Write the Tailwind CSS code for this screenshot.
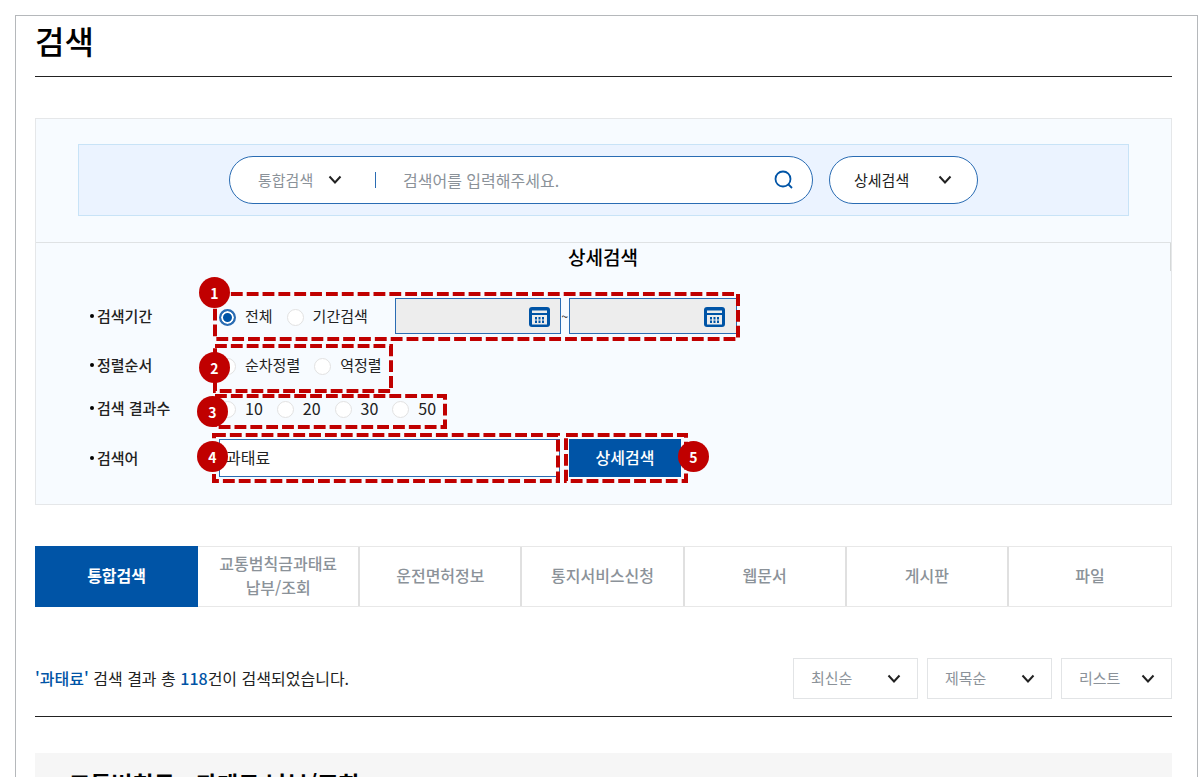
<!DOCTYPE html>
<html lang="ko">

<head>
    <meta charset="UTF-8">
    <meta name="viewport" content="width=device-width, initial-scale=1.0">
    <title>검색</title>
    <script src="https://cdn.jsdelivr.net/npm/@tailwindcss/browser@4"></script>
</head>

<body class="bg-white font-['Noto_Sans_CJK_KR',sans-serif] text-[#222]">
    <main class="mt-[15px] mr-[5px] ml-[15px] h-[calc(100vh-15px)] overflow-hidden border-t border-r border-l border-[#b5b8bb] pr-[25px] pl-[19px]">
        <h1 class="border-b border-[#222] pb-3 text-[32px] leading-[48px] font-medium text-black">검색</h1>

        <section class="mt-[41px] border border-[#e5e7e9] bg-[#f7fbff]">
            <form class="mx-[42px] mt-[25px] mb-[26px] flex justify-center gap-4 border border-[#c8e3f7] bg-[#ebf3ff] py-[11px]">
                <div class="flex h-12 w-[584px] items-center rounded-full border border-[#2a6cb3] bg-white pr-[18px] pl-7">
                    <div class="relative flex items-center">
                        <select aria-label="검색 구분" class="w-[84px] appearance-none text-[15px] text-[#8b9299]">
                            <option>통합검색</option>
                        </select>
                        <svg class="pointer-events-none absolute right-0" width="14" height="10" viewBox="0 0 14 10" fill="none" stroke="#222" stroke-width="2"><path d="M1.500 1.500 7 7.500l5.500-6" /></svg>
                    </div>
                    <span class="ml-[33px] h-4 w-px bg-[#2a6cb3]"></span>
                    <input type="text" aria-label="검색어" placeholder="검색어를 입력해주세요." class="ml-[27px] min-w-0 flex-1 text-base outline-none placeholder:text-[#8b9299]">
                    <button type="button" aria-label="검색">
                        <svg width="20" height="20" viewBox="0 0 20 20" fill="none" stroke="#0054a6" stroke-width="1.800"><circle cx="9" cy="9" r="7.500" /><path d="m14 14 4 4" /></svg>
                    </button>
                </div>
                <button type="button" class="flex h-12 w-[149px] items-center justify-between rounded-full border border-[#2a6cb3] bg-white pr-[25px] pl-6 text-[15px]">
                    상세검색
                    <svg width="14" height="10" viewBox="0 0 14 10" fill="none" stroke="#222" stroke-width="2"><path d="M1.500 1.500 7 7.500l5.500-6" /></svg>
                </button>
            </form>

            <form class="border-t border-[#dfe2e4] pb-[27px]">
                <h2 class="border-r border-[#d5d8d8] text-center text-[19px] leading-7 font-medium text-black">상세검색</h2>

                <div class="mt-[27px] flex flex-col gap-[19px] pl-[54px] text-[15px]">
                    <!-- 검색기간 -->
                    <div class="flex h-9 items-center">
                        <div class="flex w-[129px] items-center gap-[3px] font-medium"><span class="size-1 rounded-full bg-black"></span>검색기간</div>
                        <div class="relative flex h-9 items-center gap-[14px]">
                            <label class="flex items-center gap-[9px]"><input type="radio" name="period" checked class="mt-[3px] size-[17px] appearance-none rounded-full border-2 border-[#2a6cb3] bg-white checked:bg-[#0054a6] checked:shadow-[inset_0_0_0_2px_#fff]">전체</label>
                            <label class="flex items-center gap-[9px]"><input type="radio" name="period" class="mt-[3px] size-[17px] appearance-none rounded-full border border-[#e2e2e2] bg-white">기간검색</label>
                            <div class="ml-[13px] flex items-center">
                                <div class="relative flex items-center">
                                    <input type="text" aria-label="시작일" readonly class="h-9 w-[166px] border border-[#2a6cb3] bg-[#ededed] px-2">
                                    <svg class="absolute right-[11px] mt-[2px]" width="21" height="20" viewBox="0 0 21 20"><rect width="21" height="20" rx="3" fill="#0054a6" /><path d="M3 3.500h15v2.500H3zM3 8h15v9.500H3z" fill="#ededed" /><path d="M6 10h2v2.500H6zM9.500 10h2v2.500h-2zM13 10h2v2.500h-2zM6 13.500h2V16H6zM9.500 13.500h2V16h-2zM13 13.500h2V16h-2z" fill="#0054a6" /></svg>
                                </div>
                                <span class="w-2 text-center text-xs">~</span>
                                <div class="relative flex items-center">
                                    <input type="text" aria-label="종료일" readonly class="h-9 w-[168px] border border-[#2a6cb3] bg-[#ededed] px-2">
                                    <svg class="absolute right-3 mt-[2px]" width="21" height="20" viewBox="0 0 21 20"><rect width="21" height="20" rx="3" fill="#0054a6" /><path d="M3 3.500h15v2.500H3zM3 8h15v9.500H3z" fill="#ededed" /><path d="M6 10h2v2.500H6zM9.500 10h2v2.500h-2zM13 10h2v2.500h-2zM6 13.500h2V16H6zM9.500 13.500h2V16h-2zM13 13.500h2V16h-2z" fill="#0054a6" /></svg>
                                </div>
                            </div>
                            <svg class="pointer-events-none absolute -top-[6px] -left-[6px] h-[49px] w-[527px]" fill="none" stroke="#c00000" stroke-width="4"><rect x="2" y="2" width="523" height="45" stroke-dasharray="11.850 4" /></svg>
                            <span class="absolute -top-[21px] -left-5 flex size-[31px] items-center justify-center rounded-full bg-[#c00000] text-sm font-bold text-white">1</span>
                        </div>
                    </div>

                    <!-- 정렬순서 -->
                    <div class="flex h-6 items-center">
                        <div class="flex w-[129px] items-center gap-[3px] font-medium"><span class="size-1 rounded-full bg-black"></span>정렬순서</div>
                        <div class="relative flex h-6 items-center gap-[14px]">
                            <label class="flex items-center gap-[9px]"><input type="radio" name="sort" class="mt-[3px] size-[17px] appearance-none rounded-full border border-[#e2e2e2] bg-white">순차정렬</label>
                            <label class="flex items-center gap-[9px]"><input type="radio" name="sort" class="mt-[3px] size-[17px] appearance-none rounded-full border border-[#e2e2e2] bg-white">역정렬</label>
                            <svg class="pointer-events-none absolute -top-[9px] -left-[6px] h-[49px] w-[180px]" fill="none" stroke="#c00000" stroke-width="4"><rect x="2" y="2" width="176" height="45" stroke-dasharray="11.850 4" /></svg>
                            <span class="absolute -top-px -left-5 flex size-[31px] items-center justify-center rounded-full bg-[#c00000] text-sm font-bold text-white">2</span>
                        </div>
                    </div>

                    <!-- 검색 결과수 -->
                    <div class="flex h-6 items-center">
                        <div class="flex w-[129px] items-center gap-[3px] font-medium"><span class="size-1 rounded-full bg-black"></span>검색 결과수</div>
                        <div class="relative flex h-6 items-center gap-[14px] text-base">
                            <label class="flex items-center gap-[9px]"><input type="radio" name="count" class="mt-[3px] size-[17px] appearance-none rounded-full border border-[#e2e2e2] bg-white">10</label>
                            <label class="flex items-center gap-[9px]"><input type="radio" name="count" class="mt-[3px] size-[17px] appearance-none rounded-full border border-[#e2e2e2] bg-white">20</label>
                            <label class="flex items-center gap-[9px]"><input type="radio" name="count" class="mt-[3px] size-[17px] appearance-none rounded-full border border-[#e2e2e2] bg-white">30</label>
                            <label class="flex items-center gap-[9px]"><input type="radio" name="count" class="mt-[3px] size-[17px] appearance-none rounded-full border border-[#e2e2e2] bg-white">50</label>
                            <svg class="pointer-events-none absolute -top-[2px] -left-[6px] h-[35px] w-[234px]" fill="none" stroke="#c00000" stroke-width="4"><rect x="2" y="2" width="230" height="31" stroke-dasharray="11.850 4" /></svg>
                            <span class="absolute top-0 -left-[22px] flex size-[31px] items-center justify-center rounded-full bg-[#c00000] text-sm font-bold text-white">3</span>
                        </div>
                    </div>

                    <!-- 검색어 -->
                    <div class="flex h-[38px] items-center">
                        <label for="keyword" class="flex w-[129px] items-center gap-[3px] font-medium"><span class="size-1 rounded-full bg-black"></span>검색어</label>
                        <div class="relative">
                            <input type="text" id="keyword" value="과태료" class="block h-[38px] w-[341px] border border-[#2a6cb3] bg-white px-[6px] pb-[3px] text-base">
                            <svg class="pointer-events-none absolute -top-[6px] -left-[7px] h-[50px] w-[348px]" fill="none" stroke="#c00000" stroke-width="4"><rect x="2" y="2" width="344" height="46" stroke-dasharray="11.850 4" /></svg>
                            <span class="absolute top-[2px] -left-[22px] flex size-[31px] items-center justify-center rounded-full bg-[#c00000] text-sm font-bold text-white">4</span>
                        </div>
                        <div class="relative ml-[9px]">
                            <button type="submit" class="block h-[38px] w-[112px] bg-[#0054a6] pb-[2px] text-base font-medium text-white">상세검색</button>
                            <svg class="pointer-events-none absolute -top-[6px] -left-[5px] h-[50px] w-[124px]" fill="none" stroke="#c00000" stroke-width="4"><rect x="2" y="2" width="120" height="46" stroke-dasharray="11.850 4" /></svg>
                            <span class="absolute top-[2px] -right-7 flex size-[31px] items-center justify-center rounded-full bg-[#c00000] text-sm font-bold text-white">5</span>
                        </div>
                    </div>
                </div>
            </form>
        </section>

        <nav class="mt-[41px] grid h-[61px] grid-cols-7 border border-[#e8e8e8] text-center font-medium text-[#8b9299]">
            <a href="#" class="-my-px -ml-px flex items-center justify-center bg-[#0054a6] pb-[3px] font-bold text-white">통합검색</a>
            <a href="#" class="flex items-center justify-center border-r-2 border-[#e0e0e0] pb-[3px]">교통범칙금과태료<br>납부/조회</a>
            <a href="#" class="flex items-center justify-center border-r-2 border-[#e0e0e0] pb-[3px]">운전면허정보</a>
            <a href="#" class="flex items-center justify-center border-r-2 border-[#e0e0e0] pb-[3px]">통지서비스신청</a>
            <a href="#" class="flex items-center justify-center border-r-2 border-[#e0e0e0] pb-[3px]">웹문서</a>
            <a href="#" class="flex items-center justify-center border-r-2 border-[#e0e0e0] pb-[3px]">게시판</a>
            <a href="#" class="flex items-center justify-center pb-[3px]">파일</a>
        </nav>

        <div class="mt-[51px] flex items-center justify-between border-b border-[#222] pb-[17px]">
            <p class="pb-[2px]"><strong class="font-medium text-[#0054a6]">'과태료'</strong> 검색 결과 총 <strong class="font-medium text-[#0054a6]">118</strong>건이 검색되었습니다.</p>
            <div class="flex gap-[9px] text-[15px] text-[#8b9299]">
                <div class="relative flex items-center">
                    <select aria-label="날짜 정렬" class="h-[41px] w-[125px] appearance-none border border-[#e2e4e6] bg-white pl-[17px]">
                        <option>최신순</option>
                    </select>
                    <svg class="pointer-events-none absolute right-[17px]" width="14" height="10" viewBox="0 0 14 10" fill="none" stroke="#222" stroke-width="2"><path d="M1.500 1.500 7 7.500l5.500-6" /></svg>
                </div>
                <div class="relative flex items-center">
                    <select aria-label="제목 정렬" class="h-[41px] w-[125px] appearance-none border border-[#e2e4e6] bg-white pl-[17px]">
                        <option>제목순</option>
                    </select>
                    <svg class="pointer-events-none absolute right-[17px]" width="14" height="10" viewBox="0 0 14 10" fill="none" stroke="#222" stroke-width="2"><path d="M1.500 1.500 7 7.500l5.500-6" /></svg>
                </div>
                <div class="relative flex items-center">
                    <select aria-label="보기 방식" class="h-[41px] w-[111px] appearance-none border border-[#e2e4e6] bg-white pl-[17px]">
                        <option>리스트</option>
                    </select>
                    <svg class="pointer-events-none absolute right-[17px]" width="14" height="10" viewBox="0 0 14 10" fill="none" stroke="#222" stroke-width="2"><path d="M1.500 1.500 7 7.500l5.500-6" /></svg>
                </div>
            </div>
        </div>

        <section class="mt-9 bg-[#f6f6f6] px-[34px] py-[14px]">
            <h3 class="text-[23px] leading-8 font-bold text-black">교통범칙금ㆍ과태료 납부/조회</h3>
        </section>
    </main>
</body>

</html>
